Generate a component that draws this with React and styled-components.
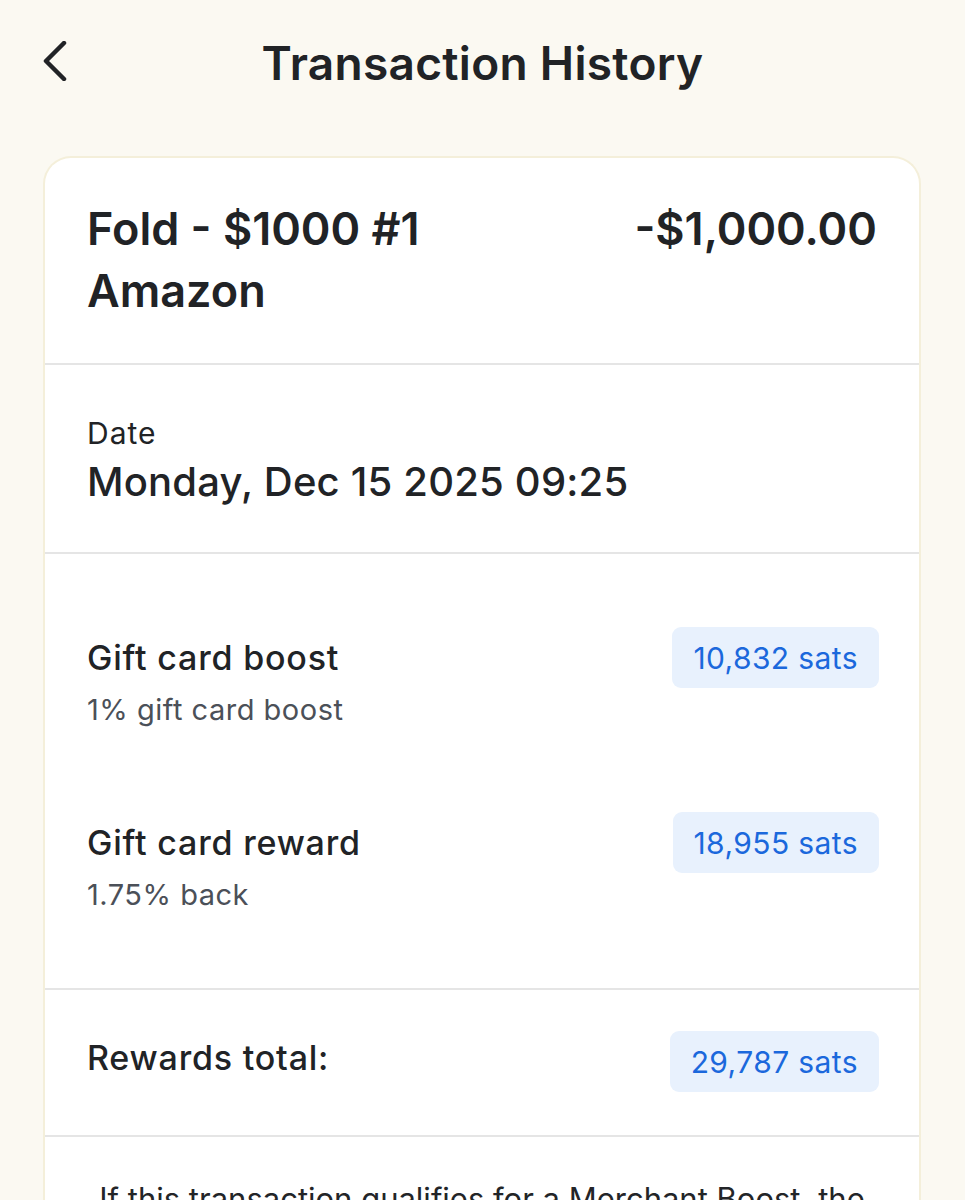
import React from "react";
import styled, { createGlobalStyle } from "styled-components";

const GlobalStyle = createGlobalStyle`
  * { box-sizing: border-box; }
  body {
    margin: 0;
    background: #fbf9f2;
    font-family: Inter, "Noto Sans", sans-serif;
    color: #212326;
  }
`;

const Page = styled.div`
  min-height: 1200px;
  display: flex;
  flex-direction: column;
`;

const Header = styled.header`
  position: relative;
  height: 124px;
  display: flex;
  align-items: center;
  justify-content: center;
`;

const BackButton = styled.button`
  position: absolute;
  left: 36px;
  top: 37px;
  width: 40px;
  height: 48px;
  padding: 0;
  border: none;
  background: transparent;
  display: flex;
  align-items: center;
  justify-content: center;
  color: #212326;
  cursor: pointer;
`;

const Title = styled.h1`
  margin: 0;
  font-size: 46px;
  font-weight: 600;
  letter-spacing: 0.3px;
  line-height: 48px;
  padding-top: 1px;
`;

const Card = styled.div`
  margin: 32px 44px 0 43px;
  flex: 1;
  background: #fff;
  border: 2px solid #f4efda;
  border-bottom: none;
  border-radius: 28px 28px 0 0;
  display: flex;
  flex-direction: column;
`;

const Section = styled.section`
  padding: ${(p) => p.$pad};
  border-bottom: ${(p) => (p.$last ? "none" : "2px solid #e5e5e5")};
`;

const HeadRow = styled.div`
  display: flex;
  justify-content: space-between;
  align-items: flex-start;
`;

const HeadText = styled.div`
  font-size: 45px;
  font-weight: 600;
  line-height: 62px;
`;

const Label = styled.div`
  font-size: 30px;
  font-weight: 400;
  letter-spacing: 1px;
  line-height: 32px;
`;

const DateValue = styled.div`
  margin-top: 9px;
  font-size: 40px;
  font-weight: 500;
  letter-spacing: 0.2px;
  line-height: 48px;
`;

const RewardRow = styled.div`
  display: flex;
  justify-content: space-between;
  align-items: flex-start;
  & + & {
    margin-top: 84px;
  }
`;

const RewardTitle = styled.div`
  font-size: 34px;
  font-weight: 500;
  letter-spacing: 0.8px;
  line-height: ${(p) => p.$lh || "61px"};
`;

const RewardSub = styled.div`
  margin-top: 4px;
  font-size: 29px;
  font-weight: 400;
  letter-spacing: 0.5px;
  line-height: 36px;
  color: #4b5058;
`;

const Badge = styled.div`
  height: 61px;
  padding: 0 21px;
  display: flex;
  align-items: center;
  border-radius: 9px;
  background: #e8f1fd;
  color: #1b68dc;
  font-size: 30px;
  font-weight: 400;
  letter-spacing: 0.4px;
  white-space: nowrap;
`;

const Note = styled.p`
  margin: 0;
  text-align: center;
  font-size: 31px;
  line-height: 44px;
  color: #232528;
`;

const rewards = [
  { title: "Gift card boost", sub: "1% gift card boost", sats: "10,832 sats" },
  { title: "Gift card reward", sub: "1.75% back", sats: "18,955 sats" },
];

const ChevronLeft = () => (
  <svg width="28" height="40" viewBox="0 0 28 40" fill="none">
    <path
      d="M22 2 L4 20 L22 38"
      stroke="currentColor"
      strokeWidth="4.5"
      strokeLinecap="round"
      strokeLinejoin="round"
    />
  </svg>
);

export default function App() {
  return (
    <Page>
      <GlobalStyle />
      <Header>
        <BackButton aria-label="Back">
          <ChevronLeft />
        </BackButton>
        <Title>Transaction History</Title>
      </Header>

      <Card>
        <Section $pad="40px 42px 41px">
          <HeadRow>
            <HeadText>
              Fold - $1000 #1
              <br />
              Amazon
            </HeadText>
            <HeadText>-$1,000.00</HeadText>
          </HeadRow>
        </Section>

        <Section $pad="52px 42px 46px">
          <Label>Date</Label>
          <DateValue>Monday, Dec 15 2025 09:25</DateValue>
        </Section>

        <Section $pad="73px 40px 75px 42px">
          {rewards.map((r) => (
            <RewardRow key={r.title}>
              <div>
                <RewardTitle>{r.title}</RewardTitle>
                <RewardSub>{r.sub}</RewardSub>
              </div>
              <Badge>{r.sats}</Badge>
            </RewardRow>
          ))}
        </Section>

        <Section $pad="41px 40px 43px 42px">
          <RewardRow>
            <RewardTitle $lh="54px">Rewards total:</RewardTitle>
            <Badge>29,787 sats</Badge>
          </RewardRow>
        </Section>

        <Section $pad="40px 52px 60px" $last>
          <Note>
            If this transaction qualifies for a Merchant Boost, the
            additional rewards will be added once the merchant confirms
            your purchase.
          </Note>
        </Section>
      </Card>
    </Page>
  );
}
